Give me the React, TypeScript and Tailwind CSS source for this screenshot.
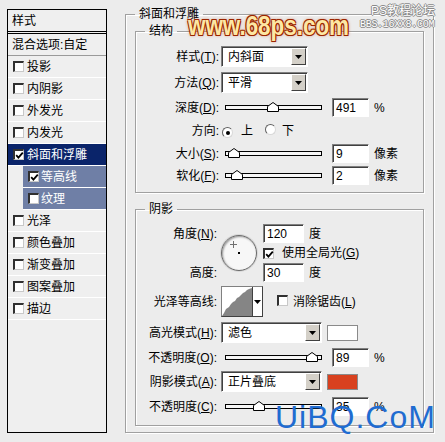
import React from "react"

const ui = "font-['Liberation_Sans','Noto_Sans_CJK_SC',sans-serif] text-[12px] leading-[14px] text-black"

function Box({ checked }: { checked?: boolean }) {
  return (
    <span className="relative inline-block w-[11px] h-[11px] shrink-0 bg-white border-t-2 border-l-2 border-t-[#303030] border-l-[#303030] border-r border-b border-r-[#c8c8c8] border-b-[#c8c8c8]">
      {checked && (
        <svg className="absolute left-[0px] top-[0px]" width="9" height="9" viewBox="0 0 9 9">
          <path d="M1.2 4.2 L3.4 6.6 L7.8 1.6" stroke="#000" strokeWidth="1.8" fill="none" />
        </svg>
      )}
    </span>
  )
}

function Radio({ on }: { on?: boolean }) {
  return (
    <span className="relative inline-flex items-center justify-center w-[11px] h-[11px] shrink-0 rounded-full bg-white border border-t-[#606060] border-l-[#606060] border-r-[#d8d8d8] border-b-[#d8d8d8]">
      {on && <span className="w-[4px] h-[4px] rounded-full bg-black" />}
    </span>
  )
}

function Arrow() {
  return (
    <svg width="7" height="4" viewBox="0 0 7 4">
      <path d="M0 0 H7 L3.5 4 Z" fill="#000" />
    </svg>
  )
}

function Select({ value, w }: { value: string; w: string }) {
  return (
    <div className={`${w} h-[21px] flex bg-white border border-t-[#808080] border-l-[#808080] border-r-white border-b-white shadow-[inset_1px_1px_0_#404040]`}>
      <span className="flex-1 pl-[6px] pt-[3px]">{value}</span>
      <span className="w-[15px] h-[17px] mt-[1px] mr-[1px] flex items-center justify-center bg-[#d4d0c8] border border-t-white border-l-white border-r-[#404040] border-b-[#404040]">
        <Arrow />
      </span>
    </div>
  )
}

function Field({ value, w }: { value: string; w: string }) {
  return (
    <div className={`${w} h-[19px] bg-white border border-t-[#808080] border-l-[#808080] border-r-white border-b-white shadow-[inset_1px_1px_0_#404040] pl-[3px] pt-[2px]`}>
      {value}
    </div>
  )
}

function Slider({ pos }: { pos: number }) {
  return (
    <div className="relative ml-[4px] w-[97px] h-[19px]">
      <div className="absolute left-0 right-0 top-[7px] h-[5px] border border-black bg-[#f6f6f6]" />
      <svg className="absolute top-[4px]" style={{ left: pos - 6 }} width="12" height="10" viewBox="0 0 12 10">
        <path d="M6 0.5 L11.5 4.5 V9.5 H0.5 V4.5 Z" fill="#fff" stroke="#000" />
      </svg>
    </div>
  )
}

function Label({ w, children }: { w: string; children: React.ReactNode }) {
  return <div className={`${w} shrink-0 text-right`}>{children}</div>
}

function SliderRow({ label, pos, value, unit, lw, mt }: { label: React.ReactNode; pos: number; value: string; unit: string; lw: string; mt: string }) {
  return (
    <div className={`flex items-center h-[19px] ${mt}`}>
      <Label w={lw}>{label}</Label>
      <div className={lw === "w-[74px]" ? "ml-[2px]" : "ml-[4px]"} />
      <Slider pos={pos} />
      <div className="ml-[10px]">
        <Field value={value} w="w-[37px]" />
      </div>
      <span className="ml-[5px]">{unit}</span>
    </div>
  )
}

const effects = ["投影", "内阴影", "外发光", "内发光"]
const effects2 = ["光泽", "颜色叠加", "渐变叠加", "图案叠加", "描边"]

function StyleList() {
  return (
    <div className="mt-[9px] ml-[7px] w-[100px] h-[424px] shrink-0 border border-black bg-[#efefef]">
      <div className="h-[24px] pl-[4px] pt-[4px] border-b-[3px] border-double border-black">样式</div>
      <div className="h-[22px] pl-[4px] pt-[4px] border-b border-[#9a9a9a]">混合选项:自定</div>
      {effects.map((e) => (
        <div key={e} className="h-[22px] flex items-center pl-[5px] border-b border-white">
          <Box />
          <span className="ml-[3px]">{e}</span>
        </div>
      ))}
      <div className="h-[22px] flex items-center pl-[5px] bg-[#0a246a] text-white border-b border-white">
        <Box checked />
        <span className="ml-[3px]">斜面和浮雕</span>
      </div>
      <div className="h-[22px] ml-[15px] flex items-center pl-[5px] bg-[#6f7fa6] text-white border-b border-white">
        <Box checked />
        <span className="ml-[2px]">等高线</span>
      </div>
      <div className="h-[22px] ml-[15px] flex items-center pl-[5px] bg-[#6f7fa6] text-white border-b border-white">
        <Box />
        <span className="ml-[2px]">纹理</span>
      </div>
      {effects2.map((e) => (
        <div key={e} className="h-[22px] flex items-center pl-[5px] border-b border-white">
          <Box />
          <span className="ml-[3px]">{e}</span>
        </div>
      ))}
    </div>
  )
}

const group = "border border-[#a0a0a0] shadow-[inset_1px_1px_0_#fff,1px_1px_0_#fff]"

function Contour() {
  return (
    <div className="w-[42px] h-[31px] flex bg-white border border-t-[#808080] border-l-[#808080] border-r-[#404040] border-b-[#404040]">
      <svg width="30" height="29" viewBox="0 0 30 29">
        <path d="M0 29 L2 26 L4 22 L7 20 L9 17 L11 15 L13 14 L15 11 L17 10 L19 8 L21 6 L23 5 L25 3 L27 2 L30 1 L30 29 Z" fill="#858585" />
      </svg>
      <div className="flex-1 border-l border-[#404040] flex items-center justify-center">
        <Arrow />
      </div>
    </div>
  )
}

function AngleDial() {
  return (
    <div className="relative w-[36px] h-[36px] rounded-full bg-[#f7f7f7] border border-[#6a6a6a] shadow-[inset_1px_1px_2px_#9a9a9a,0_0_0_1px_#d8d8d8]">
      <span className="absolute left-[8px] top-[5px] w-[7px] h-[1px] bg-[#707070] mt-[3px]" />
      <span className="absolute left-[11px] top-[5px] w-[1px] h-[7px] bg-[#707070]" />
      <span className="absolute left-[16px] top-[16px] w-[2px] h-[2px] bg-black" />
    </div>
  )
}

export default function App() {
  return (
    <div className={`relative w-[445px] h-[442px] overflow-hidden bg-[#ececec] flex items-start ${ui}`}>
      <StyleList />

      <fieldset className={`mt-[7px] ml-[18px] w-[309px] h-[426px] px-[9px] pb-[6px] ${group}`}>
        <legend className="ml-0 px-[4px] leading-[14px]">斜面和浮雕</legend>

        <fieldset className={`mt-[3px] px-[9px] pt-[8px] pb-[7px] ${group}`}>
          <legend className="px-[4px] leading-[14px]">结构</legend>

          <div className="flex items-center h-[21px]">
            <Label w="w-[74px]">样式(<u>T</u>):</Label>
            <div className="ml-[2px]"><Select value="内斜面" w="w-[87px]" /></div>
          </div>
          <div className="flex items-center h-[21px] mt-[5px]">
            <Label w="w-[74px]">方法(<u>Q</u>):</Label>
            <div className="ml-[2px]"><Select value="平滑" w="w-[87px]" /></div>
          </div>
          <SliderRow mt="mt-[5px]" lw="w-[74px]" label={<>深度(<u>D</u>):</>} pos={48} value="491" unit="%" />
          <div className="flex items-center h-[20px] mt-[4px]">
            <Label w="w-[74px]">方向:</Label>
            <span className="ml-[3px]"><Radio on /></span>
            <span className="ml-[8px]">上</span>
            <span className="ml-[12px]"><Radio /></span>
            <span className="ml-[6px]">下</span>
          </div>
          <SliderRow mt="mt-[3px]" lw="w-[74px]" label={<>大小(<u>S</u>):</>} pos={9} value="9" unit="像素" />
          <SliderRow mt="mt-[3px]" lw="w-[74px]" label={<>软化(<u>F</u>):</>} pos={12} value="2" unit="像素" />
        </fieldset>

        <fieldset className={`mt-[9px] px-[9px] pt-[8px] pb-[9px] ${group}`}>
          <legend className="px-[4px] leading-[14px]">阴影</legend>

          <div className="flex h-[58px]">
            <div className="w-[72px] shrink-0 flex flex-col justify-between text-right">
              <div className="h-[19px] pt-[3px]">角度(<u>N</u>):</div>
              <div className="h-[19px] pt-[3px]">高度:</div>
            </div>
            <div className="ml-[4px] self-center"><AngleDial /></div>
            <div className="ml-[6px] flex flex-col">
              <div className="flex items-center h-[19px]">
                <Field value="120" w="w-[41px]" />
                <span className="ml-[5px]">度</span>
              </div>
              <div className="flex items-center h-[20px]">
                <Box checked />
                <span className="ml-[8px]">使用全局光(<u>G</u>)</span>
              </div>
              <div className="flex items-center h-[19px]">
                <Field value="30" w="w-[41px]" />
                <span className="ml-[5px]">度</span>
              </div>
            </div>
          </div>

          <div className="flex items-center h-[31px] mt-[4px]">
            <Label w="w-[72px]">光泽等高线:</Label>
            <div className="ml-[4px]"><Contour /></div>
            <span className="ml-[14px]"><Box /></span>
            <span className="ml-[5px]">消除锯齿(<u>L</u>)</span>
          </div>

          <div className="flex items-center h-[21px] mt-[5px]">
            <Label w="w-[72px]">高光模式(<u>H</u>):</Label>
            <div className="ml-[4px]"><Select value="滤色" w="w-[101px]" /></div>
            <div className="ml-[5px] w-[31px] h-[16px] bg-white border border-[#8a8a8a]" />
          </div>
          <SliderRow mt="mt-[5px]" lw="w-[72px]" label={<>不透明度(<u>O</u>):</>} pos={87} value="89" unit="%" />
          <div className="flex items-center h-[21px] mt-[4px]">
            <Label w="w-[72px]">阴影模式(<u>A</u>):</Label>
            <div className="ml-[4px]"><Select value="正片叠底" w="w-[101px]" /></div>
            <div className="ml-[5px] w-[31px] h-[16px] bg-[#d8411f] border border-[#8a8a8a]" />
          </div>
          <SliderRow mt="mt-[5px]" lw="w-[72px]" label={<>不透明度(<u>C</u>):</>} pos={34} value="35" unit="%" />
        </fieldset>
      </fieldset>

      {/* watermarks */}
      <div className="absolute left-[188px] top-[12px] origin-left scale-x-[0.8] font-['Liberation_Sans',sans-serif] text-[28px] leading-[28px] font-bold text-[#fde7a4] [text-shadow:1px_1px_0_#9a2400,-1px_-1px_0_#9a2400,1px_-1px_0_#9a2400,-1px_1px_0_#9a2400,0_0_4px_#c84a10]">
        www.68ps.com
      </div>
      <div className="absolute left-[371px] top-[5px] text-[12px] leading-[13px] text-white [text-shadow:1px_0_0_#8a8a8a,-1px_0_0_#8a8a8a,0_1px_0_#8a8a8a,0_-1px_0_#8a8a8a]">
        PS教程论坛
      </div>
      <div className="absolute left-[360px] top-[19px] font-['Liberation_Mono',monospace] text-[10px] leading-[11px] tracking-[-0.3px] text-white [text-shadow:1px_0_0_#8a8a8a,-1px_0_0_#8a8a8a,0_1px_0_#8a8a8a,0_-1px_0_#8a8a8a]">
        BBS.16XX8.COM
      </div>
      <div className="absolute left-[275px] top-[401px] font-['Liberation_Sans',sans-serif] text-[32px] leading-[32px] tracking-[1px] text-[#1f6cd1]">
        UiBQ.CoM
      </div>
    </div>
  )
}
